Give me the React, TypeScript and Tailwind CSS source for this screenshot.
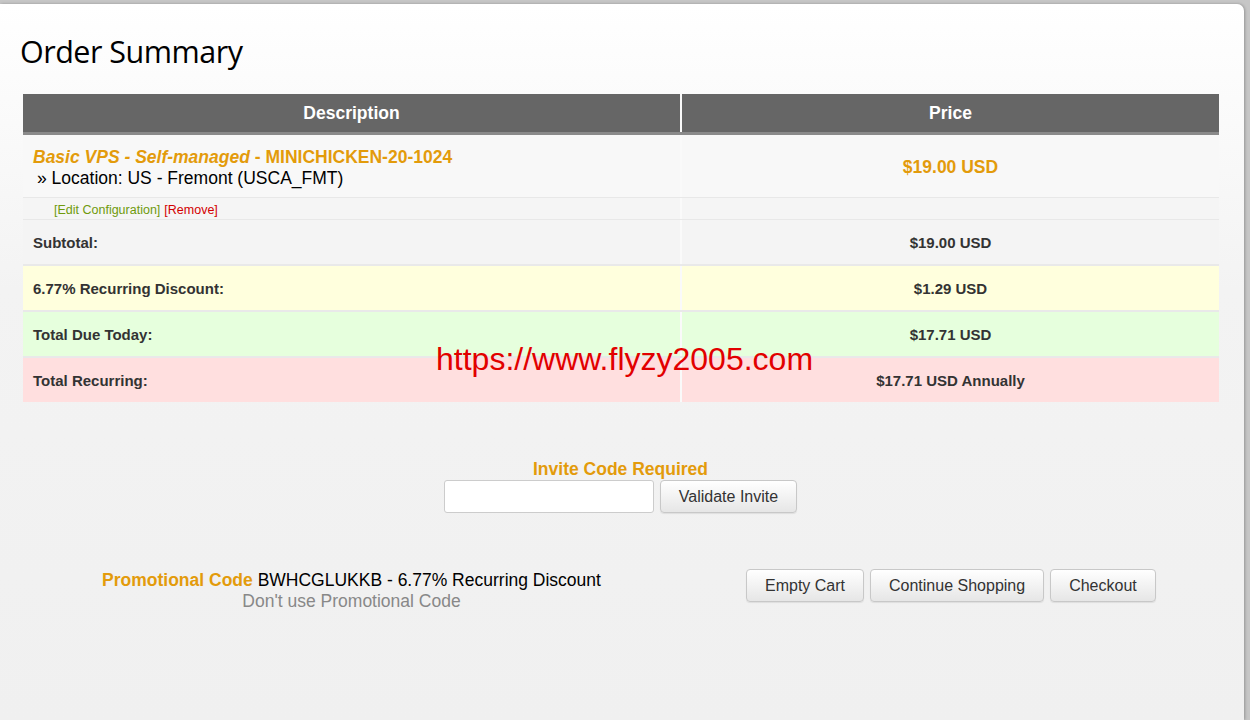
import React from "react";

const orange = "text-[#e39b0b]";

function Row({
  label,
  price,
  bg,
  last,
}: {
  label: string;
  price: string;
  bg: string;
  last?: boolean;
}) {
  return (
    <div
      className={`grid grid-cols-[657px_539px] ${last ? "" : "border-b-2 border-[#e9e9e9]"} ${bg}`}
    >
      <div className="flex h-[44px] items-center pl-[10px] pt-[2px] text-[15px] font-bold text-[#333]">
        {label}
      </div>
      <div className="flex h-[44px] items-center justify-center border-l-2 border-[#fafafa] pt-[2px] text-[15px] font-bold text-[#333]">
        {price}
      </div>
    </div>
  );
}

function Btn({ children }: { children: React.ReactNode }) {
  return (
    <button className="h-[33px] rounded-[4px] border border-[#c8c8c8] bg-gradient-to-b from-white to-[#e6e6e6] px-[18px] text-[16px] text-[#333] shadow-[0_1px_1px_rgba(0,0,0,0.08)]">
      {children}
    </button>
  );
}

export default function App() {
  return (
    <div
      className="h-[720px] w-[1250px] overflow-hidden bg-[#c6c6c6] pt-[4px] pr-[6px]"
      style={{ fontFamily: '"Liberation Sans", Arial, sans-serif' }}
    >
      <div className="relative h-full rounded-tr-[7px] bg-gradient-to-b from-white via-[#f3f3f3] via-40% to-[#f0f0f0] shadow-[1px_0_3px_rgba(0,0,0,0.25)]">
        <h1
          className="pl-[20px] pt-[27px] text-[30.5px] leading-[40px] text-black tracking-[-0.5px]"
          style={{ fontFamily: '"Open Sans", "Noto Sans", sans-serif' }}
        >
          Order Summary
        </h1>

        <div className="ml-[23px] mt-[23px] w-[1196px]">
          {/* header */}
          <div className="grid grid-cols-[657px_539px] border-b-[3px] border-[#8a8a8a] bg-[#666]">
            <div className="flex h-[38px] items-center justify-center text-[17.5px] font-bold text-white">
              Description
            </div>
            <div className="flex h-[38px] items-center justify-center border-l-2 border-[#fafafa] text-[17.5px] font-bold text-white">
              Price
            </div>
          </div>

          {/* product */}
          <div className="grid grid-cols-[657px_539px] border-b border-[#e8e8e8] bg-[#f8f8f8]">
            <div className="flex h-[62px] flex-col justify-center pl-[10px] pt-[4px] text-[17.5px] leading-[21px]">
              <div className={`font-bold ${orange}`}>
                <em>Basic VPS - Self-managed</em> - MINICHICKEN-20-1024
              </div>
              <div className="pl-[4px] text-black">» Location: US - Fremont (USCA_FMT)</div>
            </div>
            <div
              className={`flex h-[62px] items-center justify-center border-l-2 border-[#fafafa] pt-[2px] text-[17.5px] font-bold ${orange}`}
            >
              $19.00 USD
            </div>
          </div>

          {/* edit links */}
          <div className="grid grid-cols-[657px_539px] border-b border-[#e8e8e8] bg-[#f5f5f5]">
            <div className="flex h-[21px] items-center pl-[31px] pt-[3px] text-[12.5px]">
              <span className="text-[#6f9a0c]">[Edit Configuration]</span>
              <span className="ml-[4px] text-[#d30000]">[Remove]</span>
            </div>
            <div className="border-l-2 border-[#fafafa]" />
          </div>

          <Row label="Subtotal:" price="$19.00 USD" bg="bg-[#f4f4f4]" />
          <Row label="6.77% Recurring Discount:" price="$1.29 USD" bg="bg-[#ffffdd]" />
          <Row label="Total Due Today:" price="$17.71 USD" bg="bg-[#e6ffdd]" />
          <Row label="Total Recurring:" price="$17.71 USD Annually" bg="bg-[#ffdfdf]" last />
        </div>

        {/* watermark */}
        <div className="absolute left-[436px] top-[337px] text-[32px] leading-[36px] text-[#e20000]">
          https://www.flyzy2005.com
        </div>

        {/* invite code */}
        <div className="mt-[57px] flex flex-col items-center pr-[3px]">
          <div className={`text-[17.5px] font-bold leading-[20px] ${orange}`}>
            Invite Code Required
          </div>
          <div className="mt-[1px] flex gap-[6px]">
            <input className="h-[33px] w-[210px] rounded-[3px] border border-[#ccc] bg-white" />
            <Btn>Validate Invite</Btn>
          </div>
        </div>

        {/* promo + actions */}
        <div className="mt-[57px] flex items-start">
          <div className="ml-[23px] flex w-[657px] flex-col items-center text-[17.5px] leading-[21px]">
            <div>
              <span className={`font-bold ${orange}`}>Promotional Code</span>{" "}
              <span className="text-black">BWHCGLUKKB - 6.77% Recurring Discount</span>
            </div>
            <div className="text-[#888]">Don't use Promotional Code</div>
          </div>
          <div className="ml-[66px] mt-[-1px] flex gap-[6px]">
            <Btn>Empty Cart</Btn>
            <Btn>Continue Shopping</Btn>
            <Btn>Checkout</Btn>
          </div>
        </div>
      </div>
    </div>
  );
}
